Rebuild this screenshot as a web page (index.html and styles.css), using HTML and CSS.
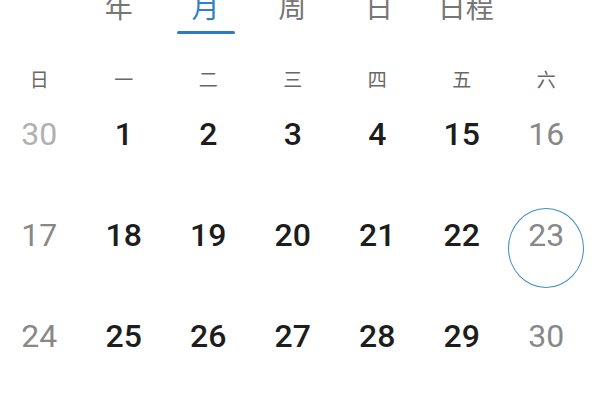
FILE: index.html
```html
<!DOCTYPE html>
<html lang="zh-CN">
<head>
<meta charset="utf-8">
<link rel="stylesheet" href="styles.css">
</head>
<body>
<div class="page">
  <nav class="tabs">
    <div class="tab"><span class="tab-label">年</span><span class="tab-bar"></span></div>
    <div class="tab active"><span class="tab-label">月</span><span class="tab-bar"></span></div>
    <div class="tab"><span class="tab-label">周</span><span class="tab-bar"></span></div>
    <div class="tab"><span class="tab-label">日</span><span class="tab-bar"></span></div>
    <div class="tab"><span class="tab-label">日程</span><span class="tab-bar"></span></div>
  </nav>
  <div class="weekdays">
    <span>日</span><span>一</span><span>二</span><span>三</span><span>四</span><span>五</span><span>六</span>
  </div>
  <div class="days">
    <div class="day faint">30</div>
    <div class="day">1</div>
    <div class="day">2</div>
    <div class="day">3</div>
    <div class="day">4</div>
    <div class="day">15</div>
    <div class="day weekend">16</div>

    <div class="day weekend">17</div>
    <div class="day">18</div>
    <div class="day">19</div>
    <div class="day">20</div>
    <div class="day">21</div>
    <div class="day">22</div>
    <div class="day weekend today">23<span class="ring"></span></div>

    <div class="day weekend">24</div>
    <div class="day">25</div>
    <div class="day">26</div>
    <div class="day">27</div>
    <div class="day">28</div>
    <div class="day">29</div>
    <div class="day weekend">30</div>
  </div>
</div>
</body>
</html>
```
FILE: styles.css
```css
html, body {
  margin: 0;
  padding: 0;
  background: #ffffff;
}
body {
  width: 600px;
  height: 400px;
  overflow: hidden;
  font-family: Roboto, "Noto Sans CJK SC", sans-serif;
}
.page {
  display: flex;
  flex-direction: column;
}
.tabs {
  display: grid;
  grid-template-columns: repeat(5, 86.75px);
  padding-left: 75.5px;
  margin-top: -8px;
}
.tab {
  display: flex;
  flex-direction: column;
  align-items: center;
}
.tab-label {
  font-family: "Noto Sans CJK SC", sans-serif;
  font-size: 28px;
  line-height: 28px;
  color: #767676;
}
.tab-bar {
  display: block;
  width: 58px;
  height: 3px;
  margin-top: 11px;
  border-radius: 2px;
  background: transparent;
}
.tab.active .tab-label {
  color: #2f80c8;
}
.tab.active .tab-bar {
  background: #2b7cc4;
}
.weekdays {
  display: grid;
  grid-template-columns: repeat(7, 84.5px);
  margin-left: -3px;
  margin-top: 30px;
  margin-bottom: 2px;
}
.weekdays span {
  font-family: "Noto Sans CJK SC", sans-serif;
  font-size: 19px;
  line-height: 30px;
  color: #686868;
  text-align: center;
}
.days {
  display: grid;
  grid-template-columns: repeat(7, 84.5px);
  grid-auto-rows: 77px;
  row-gap: 24px;
  margin-left: -3px;
}
.day {
  position: relative;
  font-family: Roboto, sans-serif;
  font-size: 32px;
  line-height: 77px;
  font-weight: 500;
  text-align: center;
  color: #1d1d1d;
}
.day.weekend {
  font-weight: 400;
  color: #888888;
}
.day.faint {
  font-weight: 400;
  color: #b0b0b0;
}
.ring {
  position: absolute;
  left: 50%;
  top: 11px;
  width: 74px;
  height: 78px;
  margin-left: -38px;
  border: 1.5px solid #3f8bc6;
  border-radius: 50%;
}
```
